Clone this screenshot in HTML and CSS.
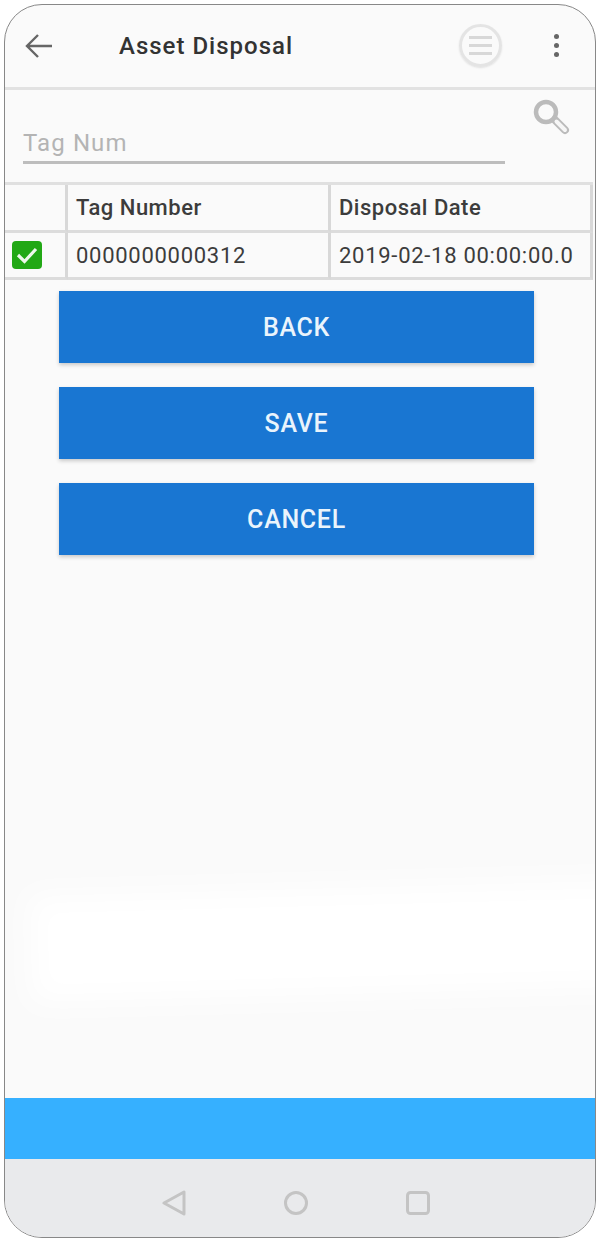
FILE: index.html
```html
<!DOCTYPE html>
<html lang="en">
<head>
    <meta charset="UTF-8">
    <meta name="viewport" content="width=device-width, initial-scale=1.0">
    <title>Asset Disposal</title>
    <link rel="stylesheet" href="styles.css">
</head>
<body>
    <div class="phone">
        <!-- Toolbar -->
        <div class="toolbar">
            <svg class="back-icon" width="30" height="28" viewBox="0 0 30 28" fill="none" stroke="#666" stroke-width="2.4">
                <path d="M14 3 L3 14 L14 25 M3 14 H28"/>
            </svg>
            <div class="toolbar-title">Asset Disposal</div>
            <div class="menu-circle">
                <span></span><span></span><span></span>
            </div>
            <div class="dots">
                <span></span><span></span><span></span>
            </div>
        </div>

        <!-- Search -->
        <div class="search-row">
            <div class="tag-input">Tag Num</div>
            <svg class="search-icon" width="40" height="38" viewBox="0 0 40 38" fill="none">
                <circle cx="14" cy="14" r="10" stroke="#bbb" stroke-width="4.5"/>
                <path d="M23 22 L33 32" stroke="#bbb" stroke-width="8" stroke-linecap="round"/>
                <path d="M24.5 23.5 L33 32" stroke="#f6f6f6" stroke-width="4" stroke-linecap="round"/>
            </svg>
        </div>

        <!-- Table -->
        <div class="grid">
            <div class="cell"></div>
            <div class="cell head">Tag Number</div>
            <div class="cell head">Disposal Date</div>
            <div class="cell check-cell">
                <svg width="30" height="28" viewBox="0 0 30 28">
                    <rect width="30" height="28" rx="4" fill="#22a815"/>
                    <path d="M6 14 L12.5 20.5 L24 8" fill="none" stroke="#eef8ea" stroke-width="3.2"/>
                </svg>
            </div>
            <div class="cell">0000000000312</div>
            <div class="cell">2019-02-18 00:00:00.0</div>
        </div>

        <!-- Buttons -->
        <div class="buttons">
            <button>BACK</button>
            <button>SAVE</button>
            <button>CANCEL</button>
        </div>

        <div class="white-patch"></div>

        <div class="blue-bar"></div>

        <!-- Android nav -->
        <div class="nav-bar">
            <svg width="26" height="26" viewBox="0 0 26 26" fill="none" stroke="#c4c4c4" stroke-width="3" stroke-linejoin="round">
                <path d="M23 2 V24 L3 13 Z"/>
            </svg>
            <svg width="26" height="26" viewBox="0 0 26 26" fill="none" stroke="#c4c4c4" stroke-width="3">
                <circle cx="13" cy="13" r="10.5"/>
            </svg>
            <svg width="26" height="26" viewBox="0 0 26 26" fill="none" stroke="#c4c4c4" stroke-width="3">
                <rect x="2.5" y="2.5" width="21" height="21" rx="3"/>
            </svg>
        </div>
    </div>
</body>
</html>
```

FILE: styles.css
```css
body {
    margin: 0;
    background: #fff;
    font-family: Roboto, "Liberation Sans", sans-serif;
}
.phone {
    position: relative;
    box-sizing: border-box;
    width: 592px;
    height: 1234px;
    margin: 4px 0 0 4px;
    border: 1px solid #888;
    border-radius: 38px;
    background: #fafafa;
    overflow: hidden;
    display: flex;
    flex-direction: column;
}
.toolbar {
    height: 85px;
    box-sizing: border-box;
    border-bottom: 3px solid #e2e2e2;
    display: flex;
    align-items: center;
    padding: 0 36px 1px 19px;
}
.back-icon {
    margin-right: 65px;
}
.toolbar-title {
    flex: 1;
    font-size: 24px;
    font-weight: 500;
    letter-spacing: 1px;
    color: #333;
}
.menu-circle {
    width: 37px;
    height: 37px;
    border: 3px solid #e4e4e4;
    border-radius: 50%;
    display: flex;
    flex-direction: column;
    justify-content: center;
    align-items: center;
    gap: 5px;
    margin-right: 52px;
    box-shadow: 0 1px 2px rgba(0, 0, 0, 0.1);
}
.menu-circle span {
    width: 23px;
    height: 3px;
    background: #d8d8d8;
}
.dots {
    display: flex;
    flex-direction: column;
    gap: 4px;
}
.dots span {
    width: 5px;
    height: 5px;
    border-radius: 50%;
    background: #666;
}
.search-row {
    height: 93px;
    box-sizing: border-box;
    display: flex;
    align-items: flex-start;
    padding: 0 0 0 18px;
}
.tag-input {
    width: 482px;
    box-sizing: border-box;
    margin-top: 37px;
    height: 37px;
    line-height: 32px;
    font-size: 24px;
    letter-spacing: 1.1px;
    color: #b4b4b4;
    border-bottom: 3px solid #bdbdbd;
}
.search-icon {
    margin: 8px 0 0 27px;
}
.grid {
    display: grid;
    grid-template-columns: 63px 263px 262px;
    grid-template-rows: 48px 47px;
    border-top: 3px solid #e0e0e0;
    margin-top: -1px;
    width: 588px;
    box-sizing: content-box;
}
.cell {
    box-sizing: border-box;
    border-right: 3px solid #d8d8d8;
    border-bottom: 3px solid #dcdcdc;
    padding-left: 8px;
    display: flex;
    align-items: center;
    font-size: 22px;
    color: #3c3c3c;
    letter-spacing: 0.72px;
}
.head {
    font-weight: 500;
    letter-spacing: 0.5px;
}
.check-cell {
    padding-left: 7px;
}
.buttons {
    display: flex;
    flex-direction: column;
    gap: 24px;
    padding: 11px 0 0 54px;
}
.buttons button {
    width: 475px;
    height: 72px;
    padding-top: 2px;
    background: #1976d2;
    color: #eaf4fc;
    border: none;
    font-family: inherit;
    font-size: 25px;
    font-weight: 500;
    letter-spacing: 0.7px;
    box-shadow: 0 2px 4px rgba(0, 0, 0, 0.2);
}
.white-patch {
    position: absolute;
    left: 26px;
    right: -60px;
    top: 883px;
    height: 106px;
    background: #fff;
    filter: blur(14px);
    transform: rotate(-1.5deg);
}
.blue-bar {
    margin-top: auto;
    height: 61px;
    background: #36b0ff;
}
.nav-bar {
    height: 78px;
    box-sizing: border-box;
    background: #e9eaec;
    display: flex;
    justify-content: center;
    gap: 96px;
    padding: 31px 8px 0 0;
}
```
